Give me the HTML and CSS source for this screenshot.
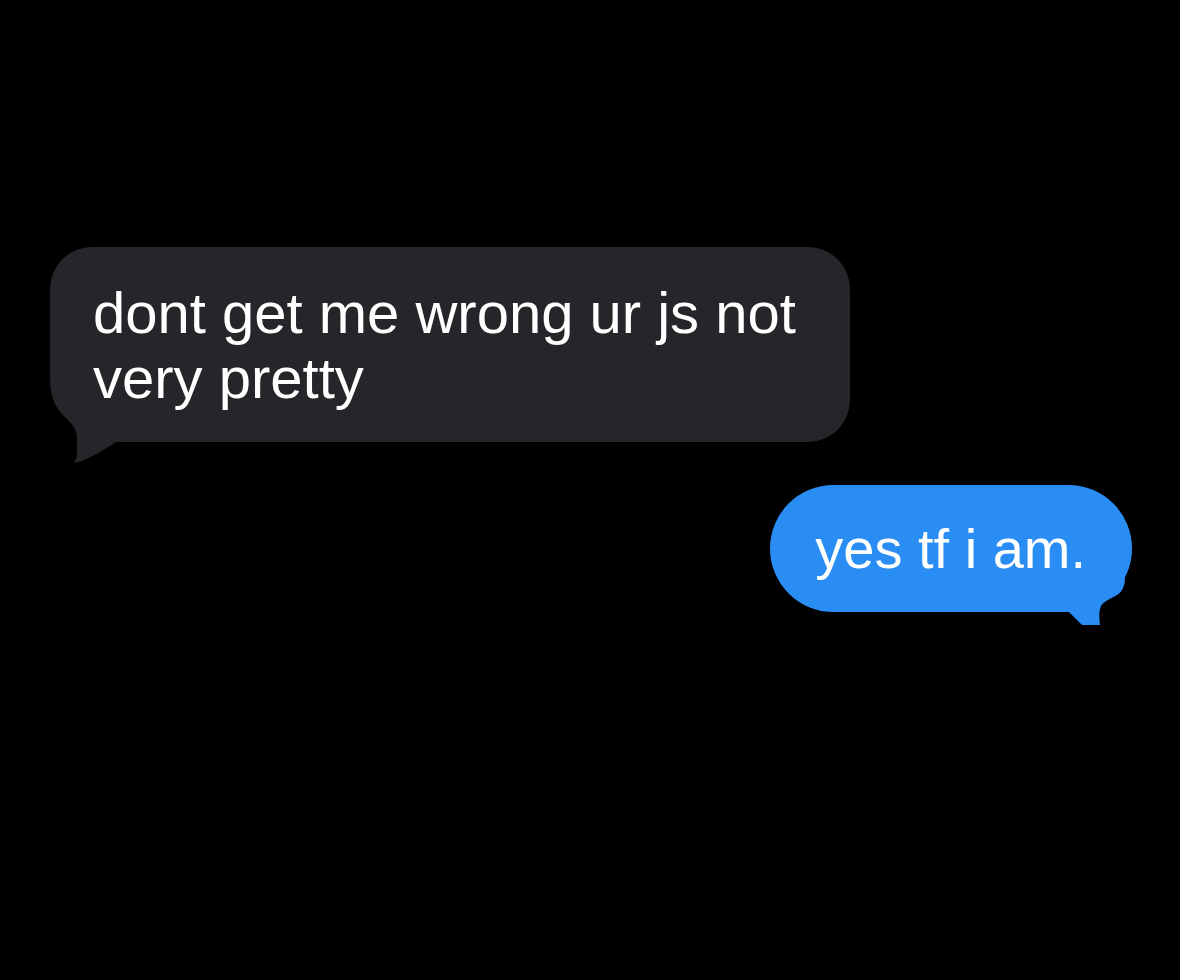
FILE: index.html
```html
<!DOCTYPE html>
<html lang="en">
<head>
<meta charset="utf-8">
<title>Messages</title>
<link rel="stylesheet" href="styles.css">
</head>
<body>
<main class="chat">
  <div class="bubble them">
    <p class="msg">dont get me wrong ur js not very pretty</p>
    <svg class="tail tail-them" width="70" height="95" viewBox="-2 -70 70 95" aria-hidden="true">
      <path class="cut" d="M -2 -70 L 0 -70 L 0 -66 C 0 -44 6 -34 14 -26 C 22 -18 27 -14 27 -4 L 27 10 C 27 15 26 18 24 21 L -2 25 Z"/>
      <path class="fill-them" d="M 14 -26 C 22 -18 27 -14 27 -4 L 27 10 C 27 15 26 18 24 21 C 36 19 50 10 66 0 L 66 -30 L 14 -30 Z"/>
    </svg>
  </div>
  <div class="bubble me">
    <p class="msg msg-me">yes tf i am.</p>
    <svg class="tail tail-me" width="74" height="62" viewBox="-72 -46 74 62" aria-hidden="true">
      <path class="fill-me" d="M -70 -10 L -63 0 L -51 12 C -50 13 -49 13 -48 13 L -32 13 C -33 6 -33 -2 -31 -6 C -28 -11 -22 -13 -15 -17 C -10 -20 -7 -26 -7 -34 L -30 -40 Z"/>
    </svg>
  </div>
</main>
</body>
</html>
```

FILE: styles.css
```css
html, body {
  margin: 0;
  padding: 0;
  background: #000;
}

body {
  width: 1180px;
  height: 980px;
  overflow: hidden;
  font-family: "Liberation Sans", Arial, sans-serif;
}

.chat {
  display: flex;
  flex-direction: column;
  padding: 247px 48px 0 50px;
}

.bubble {
  position: relative;
  box-sizing: border-box;
  color: #fff;
}

.msg {
  margin: 0;
  font-size: 58px;
  line-height: 65px;
  font-weight: 400;
}

.msg-me {
  font-size: 56px;
}

.them {
  align-self: flex-start;
  width: 800px;
  padding: 33px 40px 32px 43px;
  background: #262529;
  border-radius: 42px;
}

.me {
  align-self: flex-end;
  margin-top: 43px;
  padding: 31px 46px 31px 45px;
  background: #2a8df4;
  border-radius: 64px;
}

.tail {
  position: absolute;
  display: block;
}

.tail-them {
  left: -2px;
  bottom: -25px;
}

.tail-me {
  right: -2px;
  bottom: -16px;
}

.cut {
  fill: #000;
}

.fill-them {
  fill: #262529;
}

.fill-me {
  fill: #2a8df4;
}
```
